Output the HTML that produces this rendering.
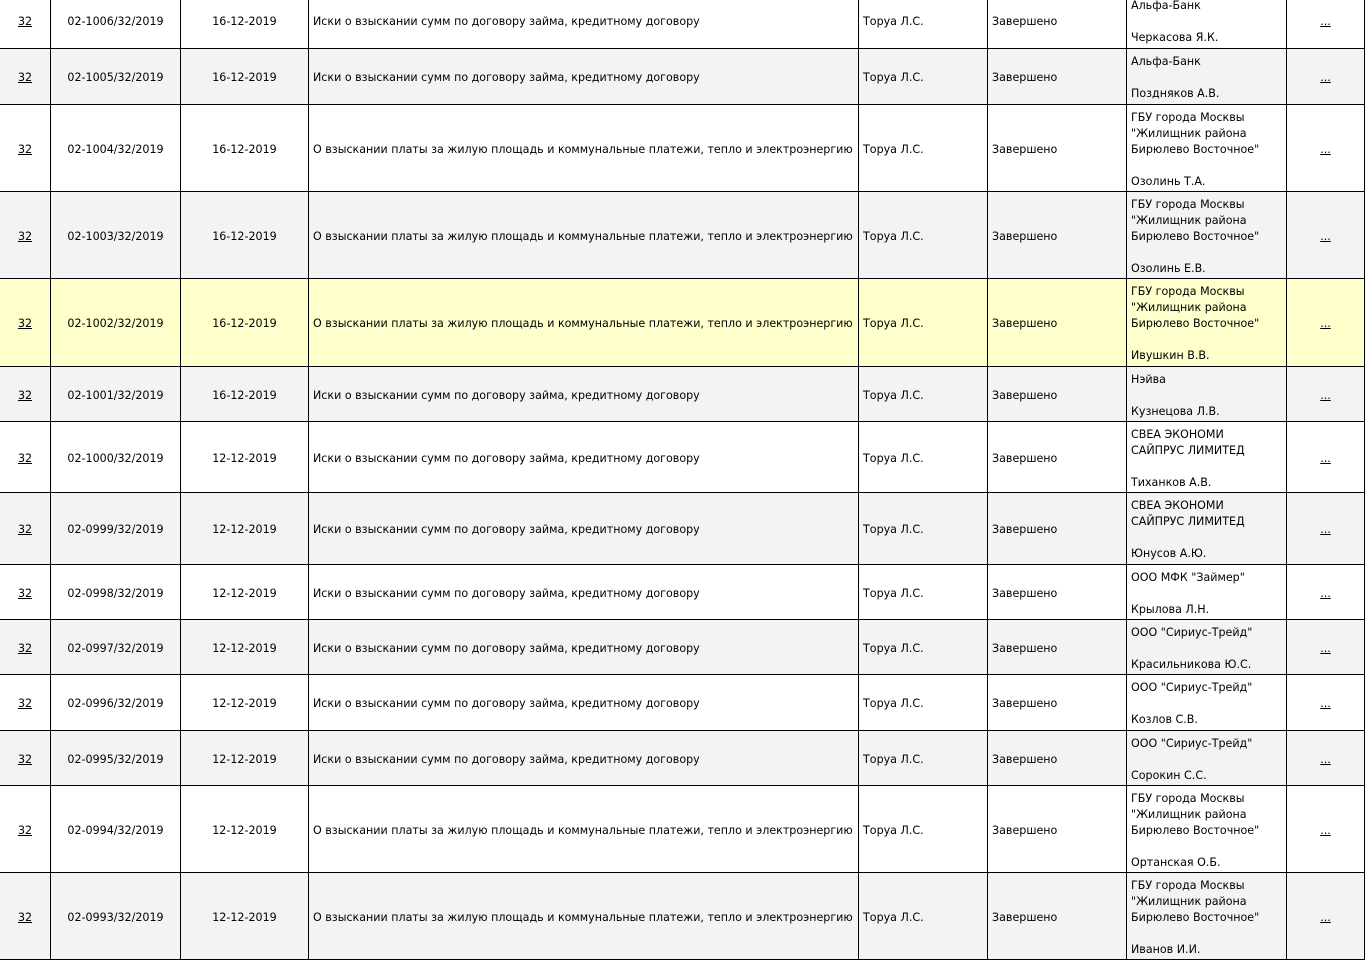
<!DOCTYPE html>
<html><head><meta charset="utf-8"><style>
html,body{margin:0;padding:0;background:#fff;overflow:hidden;width:1365px;height:915px}
table{position:absolute;left:-1px;top:-8px;width:1365px;border-collapse:collapse;table-layout:fixed;font-family:"DejaVu Sans","Liberation Sans",sans-serif;font-size:11.1px;color:#000}
td{border:1px solid #000;padding:3px 4px 0 4px;line-height:16px;vertical-align:middle;white-space:nowrap;overflow:hidden}
td.c{text-align:center}
a{color:#000;text-decoration:underline}
tr.g td{background:#f3f3f3}
tr.y td{background:#ffffcc}
</style></head><body>
<table>
<colgroup><col style="width:51px"><col style="width:130px"><col style="width:128px"><col style="width:550px"><col style="width:129px"><col style="width:139px"><col style="width:160px"><col style="width:78px"></colgroup>
<tr style="height:56px"><td class="c"><a>32</a></td><td class="c">02-1006/32/2019</td><td class="c">16-12-2019</td><td>Иски о взыскании сумм по договору займа, кредитному договору</td><td>Торуа Л.С.</td><td>Завершено</td><td>Альфа-Банк<br><br>Черкасова Я.К.</td><td class="c"><a>...</a></td></tr>
<tr class="g" style="height:56px"><td class="c"><a>32</a></td><td class="c">02-1005/32/2019</td><td class="c">16-12-2019</td><td>Иски о взыскании сумм по договору займа, кредитному договору</td><td>Торуа Л.С.</td><td>Завершено</td><td>Альфа-Банк<br><br>Поздняков А.В.</td><td class="c"><a>...</a></td></tr>
<tr style="height:87px"><td class="c"><a>32</a></td><td class="c">02-1004/32/2019</td><td class="c">16-12-2019</td><td>О взыскании платы за жилую площадь и коммунальные платежи, тепло и электроэнергию</td><td>Торуа Л.С.</td><td>Завершено</td><td>ГБУ города Москвы<br>"Жилищник района<br>Бирюлево Восточное"<br><br>Озолинь Т.А.</td><td class="c"><a>...</a></td></tr>
<tr class="g" style="height:87px"><td class="c"><a>32</a></td><td class="c">02-1003/32/2019</td><td class="c">16-12-2019</td><td>О взыскании платы за жилую площадь и коммунальные платежи, тепло и электроэнергию</td><td>Торуа Л.С.</td><td>Завершено</td><td>ГБУ города Москвы<br>"Жилищник района<br>Бирюлево Восточное"<br><br>Озолинь Е.В.</td><td class="c"><a>...</a></td></tr>
<tr class="y" style="height:88px"><td class="c"><a>32</a></td><td class="c">02-1002/32/2019</td><td class="c">16-12-2019</td><td>О взыскании платы за жилую площадь и коммунальные платежи, тепло и электроэнергию</td><td>Торуа Л.С.</td><td>Завершено</td><td>ГБУ города Москвы<br>"Жилищник района<br>Бирюлево Восточное"<br><br>Ивушкин В.В.</td><td class="c"><a>...</a></td></tr>
<tr class="g" style="height:55px"><td class="c"><a>32</a></td><td class="c">02-1001/32/2019</td><td class="c">16-12-2019</td><td>Иски о взыскании сумм по договору займа, кредитному договору</td><td>Торуа Л.С.</td><td>Завершено</td><td>Нэйва<br><br>Кузнецова Л.В.</td><td class="c"><a>...</a></td></tr>
<tr style="height:71px"><td class="c"><a>32</a></td><td class="c">02-1000/32/2019</td><td class="c">12-12-2019</td><td>Иски о взыскании сумм по договору займа, кредитному договору</td><td>Торуа Л.С.</td><td>Завершено</td><td>СВЕА ЭКОНОМИ<br>САЙПРУС ЛИМИТЕД<br><br>Тиханков А.В.</td><td class="c"><a>...</a></td></tr>
<tr class="g" style="height:72px"><td class="c"><a>32</a></td><td class="c">02-0999/32/2019</td><td class="c">12-12-2019</td><td>Иски о взыскании сумм по договору займа, кредитному договору</td><td>Торуа Л.С.</td><td>Завершено</td><td>СВЕА ЭКОНОМИ<br>САЙПРУС ЛИМИТЕД<br><br>Юнусов А.Ю.</td><td class="c"><a>...</a></td></tr>
<tr style="height:55px"><td class="c"><a>32</a></td><td class="c">02-0998/32/2019</td><td class="c">12-12-2019</td><td>Иски о взыскании сумм по договору займа, кредитному договору</td><td>Торуа Л.С.</td><td>Завершено</td><td>ООО МФК "Займер"<br><br>Крылова Л.Н.</td><td class="c"><a>...</a></td></tr>
<tr class="g" style="height:55px"><td class="c"><a>32</a></td><td class="c">02-0997/32/2019</td><td class="c">12-12-2019</td><td>Иски о взыскании сумм по договору займа, кредитному договору</td><td>Торуа Л.С.</td><td>Завершено</td><td>ООО "Сириус-Трейд"<br><br>Красильникова Ю.С.</td><td class="c"><a>...</a></td></tr>
<tr style="height:56px"><td class="c"><a>32</a></td><td class="c">02-0996/32/2019</td><td class="c">12-12-2019</td><td>Иски о взыскании сумм по договору займа, кредитному договору</td><td>Торуа Л.С.</td><td>Завершено</td><td>ООО "Сириус-Трейд"<br><br>Козлов С.В.</td><td class="c"><a>...</a></td></tr>
<tr class="g" style="height:55px"><td class="c"><a>32</a></td><td class="c">02-0995/32/2019</td><td class="c">12-12-2019</td><td>Иски о взыскании сумм по договору займа, кредитному договору</td><td>Торуа Л.С.</td><td>Завершено</td><td>ООО "Сириус-Трейд"<br><br>Сорокин С.С.</td><td class="c"><a>...</a></td></tr>
<tr style="height:87px"><td class="c"><a>32</a></td><td class="c">02-0994/32/2019</td><td class="c">12-12-2019</td><td>О взыскании платы за жилую площадь и коммунальные платежи, тепло и электроэнергию</td><td>Торуа Л.С.</td><td>Завершено</td><td>ГБУ города Москвы<br>"Жилищник района<br>Бирюлево Восточное"<br><br>Ортанская О.Б.</td><td class="c"><a>...</a></td></tr>
<tr class="g" style="height:87px"><td class="c"><a>32</a></td><td class="c">02-0993/32/2019</td><td class="c">12-12-2019</td><td>О взыскании платы за жилую площадь и коммунальные платежи, тепло и электроэнергию</td><td>Торуа Л.С.</td><td>Завершено</td><td>ГБУ города Москвы<br>"Жилищник района<br>Бирюлево Восточное"<br><br>Иванов И.И.</td><td class="c"><a>...</a></td></tr>
</table>
</body></html>
